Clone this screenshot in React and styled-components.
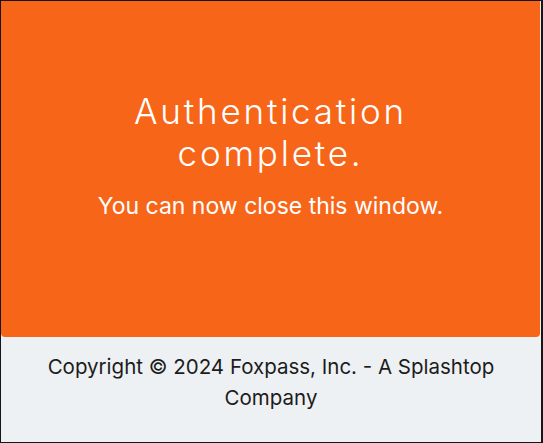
import React from 'react'
import styled, { createGlobalStyle } from 'styled-components'

const GlobalStyle = createGlobalStyle`
    html, body {
        margin: 0;
        padding: 0;
        background: #eef1f3;
    }

    * {
        box-sizing: border-box;
    }
`

const Page = styled.main`
    min-height: 100vh;
    display: flex;
    flex-direction: column;
    border: 1px solid #161616;
    border-right-width: 2px;
    background: #eef1f3;
`

const Panel = styled.section`
    height: 336px;
    margin-right: 1px;
    padding: 89px 24px 0;
    background-color: #f76519;
    border-radius: 0 0 4px 4px;
    color: #fff;
    text-align: center;
`

const Title = styled.h1`
    margin: 0;
    font-family: Inter, 'Open Sans', sans-serif;
    font-weight: 300;
    font-size: 35px;
    line-height: 42px;
    letter-spacing: 2.8px;
`

const Message = styled.p`
    margin: 17px 0 0;
    font-family: Inter, 'Liberation Sans', sans-serif;
    font-size: 23px;
    line-height: 30px;
`

const Footer = styled.footer`
    flex-grow: 1;
    padding: 14px 30px 0;
    text-align: center;
    font-family: Inter, 'Liberation Sans', sans-serif;
    font-size: 20.5px;
    line-height: 31px;
    color: #1c1c1c;
`

const App = () => {
    return (
        <>
            <GlobalStyle />
            <Page>
                <Panel>
                    <Title>Authentication<br />complete.</Title>
                    <Message>You can now close this window.</Message>
                </Panel>
                <Footer>Copyright © 2024 Foxpass, Inc. - A Splashtop Company</Footer>
            </Page>
        </>
    )
}

export default App
